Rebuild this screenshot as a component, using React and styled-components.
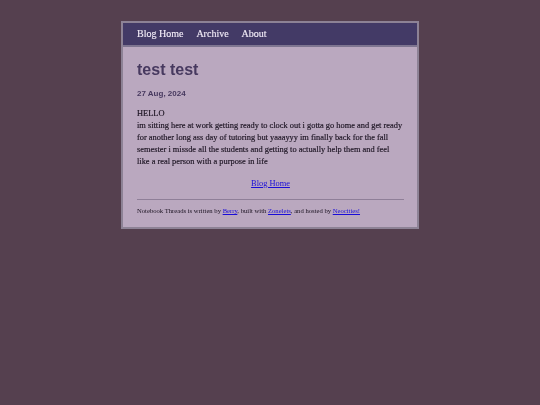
import React from "react";
import styled, { createGlobalStyle } from "styled-components";

const Global = createGlobalStyle`
  html, body { margin: 0; padding: 0; }
  body { background: #55404f; font-family: "Liberation Serif", "Times New Roman", serif; }
`;

const Page = styled.div`
  padding-top: 21px;
  display: flex;
  justify-content: center;
`;

const Box = styled.div`
  width: 294px;
  border: 2px solid #8d8295;
  background: #baa8bf;
  will-change: transform;
`;

const Nav = styled.nav`
  background: #433a66;
  border-bottom: 2px solid #7e7590;
  display: flex;
  align-items: center;
  gap: 13px;
  padding-left: 14px;
  padding-bottom: 1px;
  box-sizing: border-box;
  height: 24px;
`;

const NavLink = styled.a`
  color: #f0eaf6;
  font-size: 10px;
  text-decoration: none;
  -webkit-text-stroke: 0.15px #f0eaf6;
`;

const Content = styled.main`
  padding: 13px 13px 12px 14px;
  color: #1a1220;
`;

const Title = styled.h1`
  font-family: "Liberation Sans", Arial, sans-serif;
  font-weight: bold;
  font-size: 16px;
  color: #47395f;
  margin: 0 0 9px 0;
  line-height: 20px;
`;

const DateLine = styled.div`
  font-family: "Liberation Sans", Arial, sans-serif;
  font-weight: bold;
  font-size: 8px;
  color: #47395f;
  margin-bottom: 10px;
`;

const Body = styled.p`
  font-size: 8.4px;
  line-height: 12px;
  margin: 0;
  -webkit-text-stroke: 0.15px #1a1220;
`;

const Center = styled.div`
  text-align: center;
  margin-top: 11px;
  font-size: 8.4px;
`;

const Link = styled.a`
  color: #1a0dd8;
  text-decoration: underline;
`;

const Rule = styled.hr`
  border: none;
  border-top: 1px solid #8f7f98;
  margin: 11px 0 7px 0;
`;

const Footer = styled.footer`
  font-size: 6.65px;
  line-height: 8px;
`;

export default function App() {
  return (
    <>
      <Global />
      <Page>
        <Box>
          <Nav>
            <NavLink href="#">Blog Home</NavLink>
            <NavLink href="#">Archive</NavLink>
            <NavLink href="#">About</NavLink>
          </Nav>
          <Content>
            <Title>test test</Title>
            <DateLine>27 Aug, 2024</DateLine>
            <Body>
              HELLO
              <br />
              im sitting here at work getting ready to clock out i gotta go home and get ready
              <br />
              for another long ass day of tutoring but yaaayyy im finally back for the fall
              <br />
              semester i missde all the students and getting to actually help them and feel
              <br />
              like a real person with a purpose in life
            </Body>
            <Center>
              <Link href="#">Blog Home</Link>
            </Center>
            <Rule />
            <Footer>
              Notebook Threads is written by <Link href="#">Berry</Link>, built with <Link href="#">Zonelets</Link>, and hosted by <Link href="#">Neocities!</Link>
            </Footer>
          </Content>
        </Box>
      </Page>
    </>
  );
}
